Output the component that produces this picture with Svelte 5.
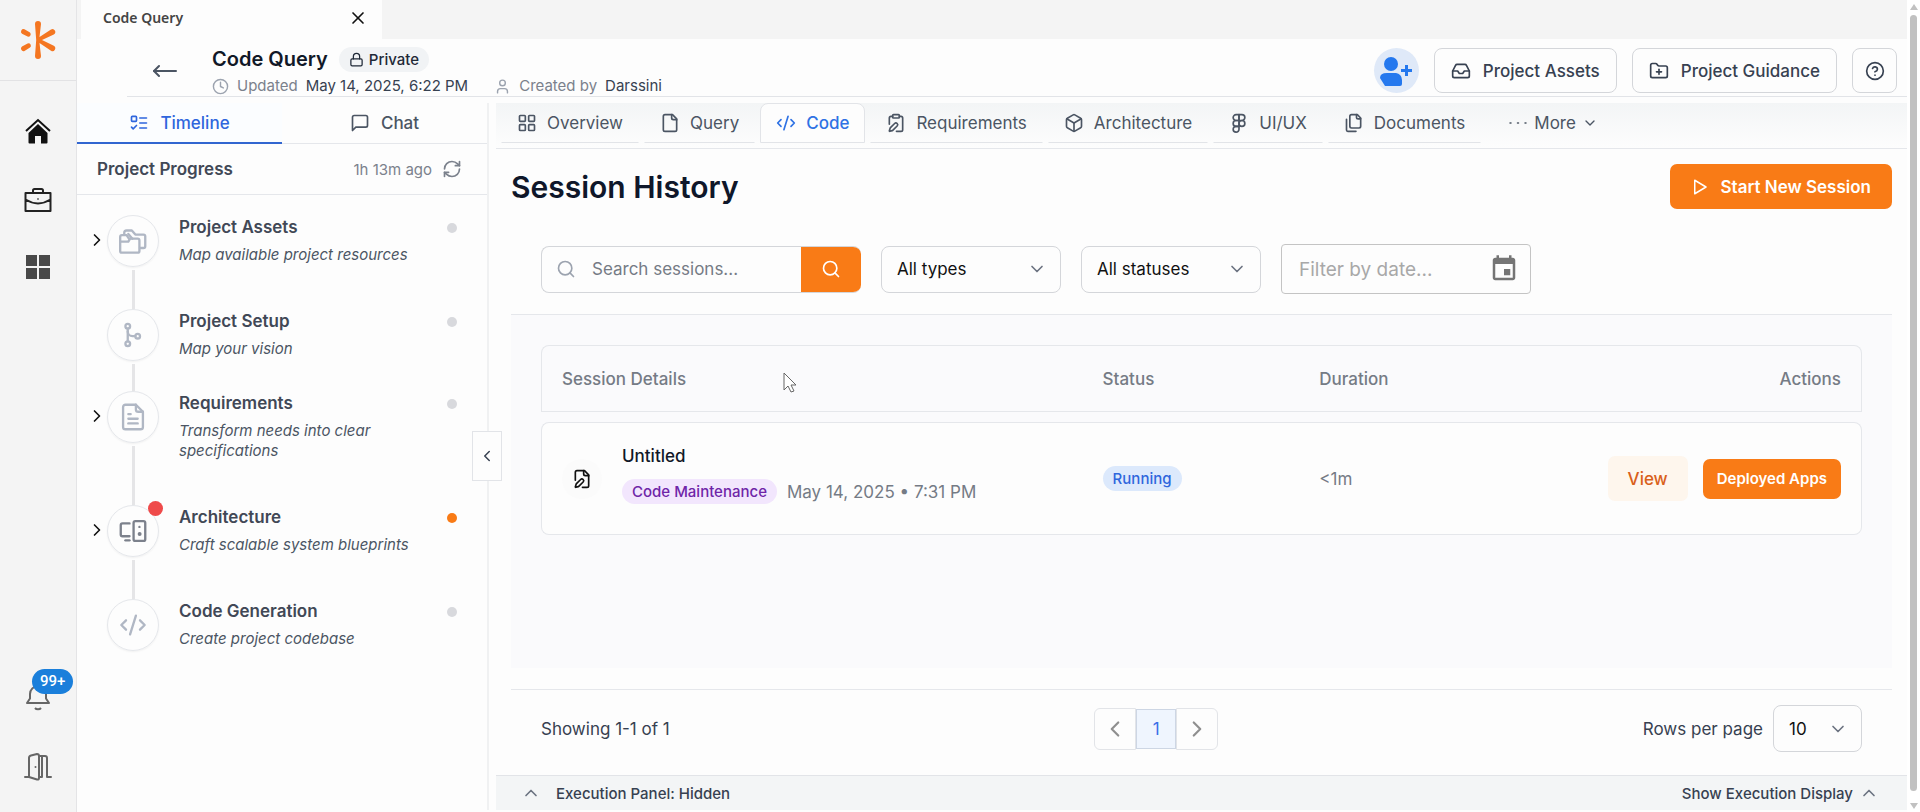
<script>
    // every icon is drawn on a 24x24 grid
    const icons = {
        arrowLeft: ['M23 12H1', 'M6 7l-5 5 5 5'],
        lock: ['M5 11h14a2 2 0 0 1 2 2v7a2 2 0 0 1-2 2H5a2 2 0 0 1-2-2v-7a2 2 0 0 1 2-2z', 'M7 11V7a5 5 0 0 1 10 0v4'],
        clock: ['M2 12a10 10 0 1 0 20 0a10 10 0 1 0-20 0', 'M12 6v6l4 2'],
        user: ['M19 21v-2a4 4 0 0 0-4-4H9a4 4 0 0 0-4 4v2', 'M8 7a4 4 0 1 0 8 0a4 4 0 1 0-8 0'],
        inbox: ['M22 12h-6l-2 3h-4l-2-3H2', 'M5.45 5.11L2 12v6a2 2 0 0 0 2 2h16a2 2 0 0 0 2-2v-6l-3.45-6.89A2 2 0 0 0 16.76 4H7.24a2 2 0 0 0-1.79 1.11z'],
        folderPlus: ['M12 10v6', 'M9 13h6', 'M20 20a2 2 0 0 0 2-2V8a2 2 0 0 0-2-2h-7.9a2 2 0 0 1-1.69-.9L9.6 3.9A2 2 0 0 0 7.93 3H4a2 2 0 0 0-2 2v13a2 2 0 0 0 2 2z'],
        help: ['M2 12a10 10 0 1 0 20 0a10 10 0 1 0-20 0', 'M9.09 9a3 3 0 0 1 5.83 1c0 2-3 3-3 3', 'M12 17h.01'],
        close: ['M18 6L6 18', 'M6 6l12 12'],
        listTodo: ['M4 4h4a1 1 0 0 1 1 1v4a1 1 0 0 1-1 1H4a1 1 0 0 1-1-1V5a1 1 0 0 1 1-1z', 'M3 17l2 2 4-4', 'M13 6h8', 'M13 12h8', 'M13 18h8'],
        chat: ['M21 15a2 2 0 0 1-2 2H7l-4 4V5a2 2 0 0 1 2-2h14a2 2 0 0 1 2 2z'],
        refresh: ['M3 12a9 9 0 0 1 9-9 9.75 9.75 0 0 1 6.74 2.74L21 8', 'M21 3v5h-5', 'M21 12a9 9 0 0 1-9 9 9.75 9.75 0 0 1-6.74-2.74L3 16', 'M8 16H3v5'],
        grid: ['M4 3h5a1 1 0 0 1 1 1v5a1 1 0 0 1-1 1H4a1 1 0 0 1-1-1V4a1 1 0 0 1 1-1z', 'M15 3h5a1 1 0 0 1 1 1v5a1 1 0 0 1-1 1h-5a1 1 0 0 1-1-1V4a1 1 0 0 1 1-1z', 'M15 14h5a1 1 0 0 1 1 1v5a1 1 0 0 1-1 1h-5a1 1 0 0 1-1-1v-5a1 1 0 0 1 1-1z', 'M4 14h5a1 1 0 0 1 1 1v5a1 1 0 0 1-1 1H4a1 1 0 0 1-1-1v-5a1 1 0 0 1 1-1z'],
        file: ['M15 2H6a2 2 0 0 0-2 2v16a2 2 0 0 0 2 2h12a2 2 0 0 0 2-2V7z', 'M14 2v4a2 2 0 0 0 2 2h4'],
        code: ['M18 16l4-4-4-4', 'M6 8l-4 4 4 4', 'M14.5 4l-5 16'],
        clipboardPen: ['M9 2h6a1 1 0 0 1 1 1v2a1 1 0 0 1-1 1H9a1 1 0 0 1-1-1V3a1 1 0 0 1 1-1z', 'M16 4h2a2 2 0 0 1 2 2v14a2 2 0 0 1-2 2h-5.5', 'M4 13.5V6a2 2 0 0 1 2-2h2', 'M13.378 15.626a1 1 0 1 0-3.004-3.004l-5.01 5.012a2 2 0 0 0-.506.854l-.837 2.87a.5.5 0 0 0 .62.62l2.87-.837a2 2 0 0 0 .854-.506z'],
        box: ['M21 8a2 2 0 0 0-1-1.73l-7-4a2 2 0 0 0-2 0l-7 4A2 2 0 0 0 3 8v8a2 2 0 0 0 1 1.73l7 4a2 2 0 0 0 2 0l7-4A2 2 0 0 0 21 16z', 'M3.3 7l8.7 5 8.7-5', 'M12 22V12'],
        figma: ['M5 5.5A3.5 3.5 0 0 1 8.5 2H12v7H8.5A3.5 3.5 0 0 1 5 5.5z', 'M12 2h3.5a3.5 3.5 0 1 1 0 7H12z', 'M12 12.5a3.5 3.5 0 1 1 7 0 3.5 3.5 0 1 1-7 0z', 'M5 19.5A3.5 3.5 0 0 1 8.5 16H12v3.5a3.5 3.5 0 1 1-7 0z', 'M5 12.5A3.5 3.5 0 0 1 8.5 9H12v7H8.5A3.5 3.5 0 0 1 5 12.5z'],
        files: ['M20 7h-3a2 2 0 0 1-2-2V2', 'M9 18a2 2 0 0 1-2-2V4a2 2 0 0 1 2-2h7l4 4v10a2 2 0 0 1-2 2z', 'M3 7.6v12.8A1.6 1.6 0 0 0 4.6 22h9.8'],
        dots: ['M11.5 12h1', 'M20.5 12h1', 'M2.5 12h1'],
        chevronDown: ['M6 9l6 6 6-6'],
        chevronUp: ['M6 15l6-6 6 6'],
        chevronLeft: ['M15 18l-6-6 6-6'],
        chevronRight: ['M9 18l6-6-6-6'],
        play: ['M5 3l15 9-15 9z'],
        search: ['M3 11a8 8 0 1 0 16 0a8 8 0 1 0-16 0', 'M21 21l-4.3-4.3'],
        filePen: ['M12.5 22H18a2 2 0 0 0 2-2V7l-5-5H6a2 2 0 0 0-2 2v9.5', 'M14 2v4a2 2 0 0 0 2 2h4', 'M13.378 15.626a1 1 0 1 0-3.004-3.004l-5.01 5.012a2 2 0 0 0-.506.854l-.837 2.87a.5.5 0 0 0 .62.62l2.87-.837a2 2 0 0 0 .854-.506z'],
        folders: ['M2.5 7h4l2 3H16a1.5 1.5 0 0 1 1.5 1.5v9A1.5 1.5 0 0 1 16 22H2.500A1.500 1.500 0 0 1 1 20.500v-12A1.500 1.500 0 0 1 2.500 7z', 'M1 12.500h7l1.500-2.500', 'M4.500 6.500V5a2 2 0 0 1 2-2h4.500l3 3.500h7A1.500 1.500 0 0 1 22.500 8v8.500A1.500 1.500 0 0 1 21 18h-3', 'M8 6l3.500 4'],
        branch: ['M5.5 4.5a2 2 0 1 0 4 0a2 2 0 1 0-4 0', 'M5.5 19.5a2 2 0 1 0 4 0a2 2 0 1 0-4 0', 'M14 13a2 2 0 1 0 4 0a2 2 0 1 0-4 0', 'M7.5 6.5v11', 'M7.5 9a4 4 0 0 0 4 4H14'],
        document: ['M14.5 1.5H5.5a2 2 0 0 0-2 2v17a2 2 0 0 0 2 2h13a2 2 0 0 0 2-2v-13z', 'M14.5 1.5v4a2 2 0 0 0 2 2h4', 'M8 9.5h2', 'M8 13.5h8', 'M8 17.5h8'],
        devices: ['M14 3.5h7A1.5 1.5 0 0 1 22.5 5v14a1.5 1.5 0 0 1-1.5 1.5h-7a1.5 1.5 0 0 1-1.5-1.5V5A1.5 1.5 0 0 1 14 3.5z', 'M9 5.5H3A1.5 1.5 0 0 0 1.5 7v8A1.5 1.5 0 0 0 3 16.5h6', 'M5.5 20H9', 'M17.5 8.5h.01', 'M17 14.5a.7.7 0 1 0 1.4 0a.7.7 0 1 0-1.4 0']
    };

    const steps = [
        { title: 'Project Assets', text: 'Map available project resources', icon: 'folders', expandable: true },
        { title: 'Project Setup', text: 'Map your vision', icon: 'branch' },
        { title: 'Requirements', text: 'Transform needs into clear specifications', icon: 'document', expandable: true },
        { title: 'Architecture', text: 'Craft scalable system blueprints', icon: 'devices', expandable: true, active: true },
        { title: 'Code Generation', text: 'Create project codebase', icon: 'code' }
    ];

    const tabs = [
        { label: 'Overview', icon: 'grid' },
        { label: 'Query', icon: 'file' },
        { label: 'Code', icon: 'code' },
        { label: 'Requirements', icon: 'clipboardPen' },
        { label: 'Architecture', icon: 'box' },
        { label: 'UI/UX', icon: 'figma' },
        { label: 'Documents', icon: 'files' }
    ];

    let currentTab = $state('Code');
    let sideTab = $state('Timeline');
    let query = $state('');
    let date = $state('');
</script>

{#snippet icon(name, size = 20)}
    <svg class="icon" width={size} height={size} viewBox="0 0 24 24" aria-hidden="true">
        {#each icons[name] as d}
            <path {d} />
        {/each}
    </svg>
{/snippet}

<div class="app">
    <nav class="rail" aria-label="Main">
        <a class="logo" href="#home" aria-label="Start page">
            <svg width="36" height="40" viewBox="0 0 36 40">
                <path class="arm" d="M15 4a3 3 0 0 1 6 0L19.500 17l11.500-7.500a2.800 2.800 0 0 1 2.800 4.900L22 20l11.800 5.800a2.800 2.800 0 0 1-2.800 4.900L19.500 23l1.500 13a3 3 0 0 1-6 0l1.200-16z" />
                <path class="arm" d="M4.500 9.300l5.500 3.300a2.400 2.400 0 0 1-2.400 4L2 13.800a2.600 2.600 0 0 1 2.500-4.500zM2 26.500l5.600-3a2.400 2.400 0 0 1 2.400 4.100L4.500 31a2.600 2.600 0 0 1-2.500-4.500z" />
            </svg>
        </a>
        <div class="rail-links">
            <a href="#home" aria-label="Home">
                <svg width="28" height="28" viewBox="0 0 28 28">
                    <path d="M2 14L14 3l12 11" fill="none" stroke="#111" stroke-width="2" />
                    <path d="M14 7L4.500 16v9.500a1 1 0 0 0 1 1H11V19h6v7.500h5.500a1 1 0 0 0 1-1V16z" fill="#111" />
                </svg>
            </a>
            <a href="#work" aria-label="Work">
                <svg width="28" height="28" viewBox="0 0 28 28" fill="none" stroke="#222" stroke-width="2" stroke-linejoin="round">
                    <path d="M1.500 8h25v18h-25zM9 8V5.500A1.500 1.500 0 0 1 10.500 4h7A1.500 1.500 0 0 1 19 5.500V8M1.500 14.500c8 5 17 5 25 0M13.500 14h1" />
                </svg>
            </a>
            <a href="#apps" aria-label="Apps">
                <svg width="28" height="28" viewBox="0 0 28 28" fill="#484848">
                    <path d="M2 2h11v11H2zM15 2h11v11H15zM2 15h11v11H2zM15 15h11v11H15z" />
                </svg>
            </a>
        </div>
        <div class="rail-links bottom">
            <button class="bell" aria-label="Notifications">
                <svg width="28" height="28" viewBox="0 0 28 28" fill="none" stroke="#666" stroke-width="2">
                    <path d="M3 18h22l-3-4.500V9A8 8 0 0 0 6 9v4.500z" stroke-linejoin="round" />
                    <path d="M11 23a3.500 2.500 0 0 0 6 0" />
                </svg>
                <span class="badge">99+</span>
            </button>
            <button aria-label="Sign out">
                <svg width="28" height="28" viewBox="0 0 28 28" fill="none" stroke="#666" stroke-width="2" stroke-linecap="round" stroke-linejoin="round">
                    <path d="M1 24h4V5q0-2 2-2.500l6-1.500q2 0 2 2v22q0 2-2 1.500L5 24M15 3h6q2 0 2 2v19h4M18 3v21h-3M11.500 14h.01" />
                </svg>
            </button>
        </div>
    </nav>

    <div class="workspace">
        <div class="tab-strip">
            <div class="file-tab">
                <span>Code Query</span>
                <button aria-label="Close tab">{@render icon('close')}</button>
            </div>
        </div>

        <header>
            <button class="back" aria-label="Back">{@render icon('arrowLeft', 24)}</button>
            <div class="project">
                <div class="name">
                    <h1>Code Query</h1>
                    <span class="private">{@render icon('lock', 15)}Private</span>
                </div>
                <div class="meta">
                    <span>{@render icon('clock', 17)}Updated <b>May 14, 2025, 6:22 PM</b></span>
                    <span>{@render icon('user', 17)}Created by <b>Darssini</b></span>
                </div>
            </div>
            <button class="invite" aria-label="Add member">
                <svg width="32" height="30" viewBox="0 0 32 30" fill="#2478ee">
                    <circle cx="11" cy="8" r="7" />
                    <path d="M7 17h9a7 7 0 0 1 6 7v4q0 2-2 2H5L0 22q0-5 7-5zM25 9h3v4h4v3h-4v4h-3v-4h-4v-3h4z" />
                </svg>
            </button>
            <button class="outlined">{@render icon('inbox')}Project Assets</button>
            <button class="outlined">{@render icon('folderPlus')}Project Guidance</button>
            <button class="outlined square" aria-label="Help">{@render icon('help')}</button>
        </header>

        <div class="body">
            <aside>
                <div class="side-tabs">
                    <button class:selected={sideTab === 'Timeline'} onclick={() => (sideTab = 'Timeline')}>
                        {@render icon('listTodo')}Timeline
                    </button>
                    <button class:selected={sideTab === 'Chat'} onclick={() => (sideTab = 'Chat')}>
                        {@render icon('chat')}Chat
                    </button>
                </div>
                <div class="progress">
                    <h2>Project Progress</h2>
                    <span>1h 13m ago</span>
                    <button aria-label="Refresh">{@render icon('refresh')}</button>
                </div>
                <ol>
                    {#each steps as step}
                        <li class:expandable={step.expandable} class:active={step.active}>
                            <div class="toggle">
                                {#if step.expandable}
                                    <button aria-label="Expand {step.title}">{@render icon('chevronRight')}</button>
                                {/if}
                            </div>
                            <div class="track">
                                <div class="disc">{@render icon(step.icon, 28)}</div>
                                <div class="line"></div>
                            </div>
                            <div class="text">
                                <h3>{step.title}</h3>
                                <p>{step.text}</p>
                            </div>
                            <i class="dot"></i>
                        </li>
                    {/each}
                </ol>
                <button class="collapse" aria-label="Collapse panel">{@render icon('chevronLeft', 18)}</button>
            </aside>

            <main>
                <div class="tabs">
                    {#each tabs as tab}
                        <button class:selected={currentTab === tab.label} onclick={() => (currentTab = tab.label)}>
                            {@render icon(tab.icon)}{tab.label}
                        </button>
                    {/each}
                    <button class="more">{@render icon('dots')}More{@render icon('chevronDown', 16)}</button>
                </div>

                <div class="content">
                    <div class="heading">
                        <h2>Session History</h2>
                        <button class="start">{@render icon('play', 18)}Start New Session</button>
                    </div>

                    <div class="filters">
                        <div class="search">
                            {@render icon('search')}
                            <input type="text" placeholder="Search sessions..." aria-label="Search sessions" bind:value={query} />
                            <button aria-label="Search">{@render icon('search')}</button>
                        </div>
                        <div class="select">
                            <select aria-label="Type"><option>All types</option></select>
                            {@render icon('chevronDown')}
                        </div>
                        <div class="select">
                            <select aria-label="Status"><option>All statuses</option></select>
                            {@render icon('chevronDown')}
                        </div>
                        <div class="date">
                            <input type="text" placeholder="Filter by date..." aria-label="Filter by date" bind:value={date} />
                            <svg width="30" height="30" viewBox="0 0 24 24" fill="#757575" aria-hidden="true">
                                <path d="M17 12h-5v5h5v-5zM16 1v2H8V1H6v2H5c-1.110 0-1.990.9-1.990 2L3 19c0 1.100.890 2 2 2h14c1.100 0 2-.900 2-2V5c0-1.100-.900-2-2-2h-1V1h-2zm3 18H5V8h14v11z" />
                            </svg>
                        </div>
                    </div>

                    <div class="sessions">
                        <table>
                            <thead>
                                <tr>
                                    <th class="details">Session Details</th>
                                    <th class="status">Status</th>
                                    <th>Duration</th>
                                    <th class="right">Actions</th>
                                </tr>
                            </thead>
                            <tbody>
                                <tr>
                                    <td>
                                        <div class="session">
                                            <div class="session-icon">{@render icon('filePen')}</div>
                                            <div class="session-text">
                                                <div class="session-name">Untitled</div>
                                                <div class="session-info">
                                                    <span class="pill purple">Code Maintenance</span>
                                                    May 14, 2025 • 7:31 PM
                                                </div>
                                            </div>
                                        </div>
                                    </td>
                                    <td><span class="pill blue">Running</span></td>
                                    <td class="duration">&lt;1m</td>
                                    <td>
                                        <div class="actions">
                                            <button class="view">View</button>
                                            <button class="deployed">Deployed Apps</button>
                                        </div>
                                    </td>
                                </tr>
                            </tbody>
                        </table>
                        <svg class="cursor" width="14" height="22" viewBox="0 0 14 22" aria-hidden="true">
                            <path d="M1 1v17l4-4 3 6 3-1-3-6h5z" />
                        </svg>
                    </div>

                    <div class="paging">
                        <span>Showing 1-1 of 1</span>
                        <div class="pages">
                            <button aria-label="Previous page">{@render icon('chevronLeft', 26)}</button>
                            <button class="current">1</button>
                            <button aria-label="Next page">{@render icon('chevronRight', 26)}</button>
                        </div>
                        <div class="rows">
                            <label for="rows">Rows per page</label>
                            <div class="select small">
                                <select id="rows"><option>10</option></select>
                                {@render icon('chevronDown')}
                            </div>
                        </div>
                    </div>
                </div>

                <footer>
                    <button>{@render icon('chevronUp')}Execution Panel: Hidden</button>
                    <button class="show">Show Execution Display{@render icon('chevronUp')}</button>
                </footer>
            </main>
        </div>
    </div>

    <div class="scrollbar" aria-hidden="true">
        <i class="up"></i>
        <i class="thumb"></i>
        <i class="down"></i>
    </div>
</div>

<style>
    :global(body) {
        background: #fdfdfd;
    }

    .app {
        display: flex;
        min-height: 100vh;
        font-family: Inter, "Liberation Sans", sans-serif;
        font-size: 17px;
        color: #374151;
    }

    .app, .app * {
        box-sizing: border-box;
    }

    h1, h2, h3, p, ol {
        margin: 0;
        padding: 0;
    }

    button, input, select {
        margin: 0;
        padding: 0;
        border: 0;
        background: none;
        color: inherit;
        font: inherit;
    }

    button {
        display: flex;
        align-items: center;
        justify-content: center;
        white-space: nowrap;
        cursor: pointer;
    }

    .icon {
        flex: none;
        fill: none;
        stroke: currentColor;
        stroke-width: 2;
        stroke-linecap: round;
        stroke-linejoin: round;
    }

    /* rail */
    .rail {
        display: flex;
        flex-direction: column;
        flex: none;
        width: 77px;
        background: #f4f4f4;
        border-right: 1px solid #e4e4e6;
    }

    .logo {
        display: flex;
        align-items: center;
        justify-content: center;
        height: 81px;
        border-bottom: 1px solid #e2e2e4;
    }

    .arm {
        fill: #f47621;
    }

    .rail-links {
        display: flex;
        flex-direction: column;
        align-items: center;
        gap: 40px;
        padding-top: 36px;
    }

    .rail-links a, .rail-links button {
        height: 28px;
    }

    .bottom {
        margin-top: auto;
        padding-bottom: 31px;
    }

    .bell {
        position: relative;
    }

    .badge {
        position: absolute;
        left: 8px;
        top: -16px;
        padding: 0 8px;
        border-radius: 13px;
        background: #1a7fdb;
        color: #fff;
        font: 500 15px/25px Roboto, sans-serif;
    }

    /* top */
    .workspace {
        display: flex;
        flex-direction: column;
        flex: 1;
        min-width: 0;
    }

    .tab-strip {
        height: 39px;
        padding-left: 4px;
        background: #f4f4f4;
    }

    .file-tab {
        display: flex;
        align-items: center;
        justify-content: space-between;
        width: 301px;
        height: 39px;
        padding: 0 14px 4px 22px;
        background: #fdfdfd;
        color: #444;
        font: 600 14px "Noto Sans", sans-serif;
    }

    .file-tab button {
        color: #111;
    }

    header {
        display: flex;
        align-items: center;
        gap: 15px;
        height: 58px;
        margin-left: 50px;
        padding: 6px 10px 0 0;
        border-bottom: 1px solid #e2e4e8;
    }

    .back {
        width: 70px;
        padding-left: 5px;
        color: #4b5563;
    }

    .project {
        flex: 1;
        align-self: flex-end;
    }

    .name {
        display: flex;
        align-items: center;
        gap: 11px;
        margin-bottom: 4px;
    }

    h1 {
        font-size: 20px;
        font-weight: 600;
        line-height: 25px;
        color: #111827;
    }

    .private {
        display: flex;
        align-items: center;
        gap: 5px;
        padding: 0 10px;
        border-radius: 13px;
        background: #f1f3f5;
        color: #1f2937;
        font-size: 15px;
        font-weight: 500;
        line-height: 25px;
    }

    .meta {
        display: flex;
        gap: 26px;
        font-size: 15px;
        line-height: 20px;
        color: #7b818c;
    }

    .meta span {
        display: flex;
        align-items: center;
        gap: 8px;
    }

    .meta .icon {
        color: #9ca3af;
    }

    .meta b {
        font-weight: 400;
        color: #374151;
    }

    .invite {
        width: 45px;
        height: 45px;
        border-radius: 50%;
        background: #dfe9f8;
    }

    .outlined {
        gap: 12px;
        height: 45px;
        padding: 0 16px;
        border: 1px solid #d4d6da;
        border-radius: 8px;
        font-weight: 500;
    }

    .square {
        width: 45px;
        padding: 0;
    }

    .body {
        display: flex;
        flex: 1;
        gap: 7px;
        padding: 6px 0 2px;
    }

    /* side panel */
    aside {
        position: relative;
        flex: none;
        width: 412px;
        border-right: 2px solid #f0f1f2;
    }

    .side-tabs {
        display: flex;
        border-bottom: 1px solid #e5e7eb;
    }

    .side-tabs button {
        flex: 1;
        gap: 11px;
        height: 40px;
        border-bottom: 1px solid transparent;
        font-weight: 500;
        color: #4b5563;
    }

    .side-tabs .selected {
        margin-bottom: -1px;
        height: 41px;
        border-bottom-width: 2px;
        background: #fbfdff;
        border-color: #3266d0;
        color: #2f66dd;
    }

    .progress {
        display: flex;
        align-items: center;
        gap: 10px;
        height: 51px;
        padding: 0 25px 0 20px;
        border-bottom: 1px solid #e5e7eb;
        font-size: 15px;
        color: #7b818c;
    }

    .progress h2 {
        flex: 1;
        font-size: 17px;
        font-weight: 600;
        color: #414856;
    }

    ol {
        padding: 20px 30px 0 12px;
        list-style: none;
    }

    li {
        display: flex;
    }

    .toggle {
        width: 18px;
        padding-top: 15px;
        color: #111;
    }

    .toggle button {
        width: 16px;
        height: 20px;
    }

    .track {
        display: flex;
        flex-direction: column;
        align-items: center;
        width: 52px;
        margin-right: 20px;
    }

    .disc {
        display: flex;
        align-items: center;
        justify-content: center;
        flex: none;
        width: 52px;
        height: 52px;
        border: 1px solid #e5e7eb;
        border-radius: 50%;
        box-shadow: 0 1px 2px #0000000d;
        color: #b0b7c4;
    }

    .line {
        flex: 1;
        width: 3px;
        margin-top: 3px;
        background: #e5e5e7;
    }

    li:last-child .line {
        display: none;
    }

    .text {
        flex: 1;
        padding-bottom: 32px;
    }

    .expandable .text {
        padding-bottom: 44px;
    }

    h3 {
        margin-bottom: 5px;
        font-size: 17px;
        font-weight: 600;
        line-height: 25px;
        color: #414856;
    }

    p {
        max-width: 240px;
        font-size: 15px;
        font-style: italic;
        line-height: 20px;
        color: #4b5563;
    }

    .dot {
        width: 10px;
        height: 10px;
        margin-top: 8px;
        border-radius: 50%;
        background: #d8d9dd;
    }

    .active .dot {
        background: #f97b16;
    }

    .disc .icon {
        stroke-width: 2;
    }

    .active .disc {
        position: relative;
        color: #7c818c;
    }

    .active .disc::after {
        content: '';
        position: absolute;
        top: -5px;
        right: -5px;
        width: 15px;
        height: 15px;
        border-radius: 50%;
        background: #ef4a4a;
    }

    .collapse {
        position: absolute;
        right: -15px;
        top: 328px;
        width: 30px;
        height: 50px;
        border: 1px solid #e2e4e8;
        background: #fdfdfd;
    }

    /* main */
    main {
        display: flex;
        flex-direction: column;
        flex: 1;
        min-width: 0;
    }

    .tabs {
        display: flex;
        gap: 5px;
        height: 46px;
        padding: 0 5px;
        background: linear-gradient(#f3f5f6, #fdfdfd);
        border-bottom: 1px solid #e5e7eb;
    }

    .tabs button {
        gap: 10px;
        height: 40px;
        padding: 0 15px;
        border: 1px solid transparent;
        border-bottom-color: #e2e4e8;
        color: #4b5563;
    }

    .tabs .selected {
        background: #fdfdfd;
        border-color: #e2e4e8;
        border-radius: 8px 8px 0 0;
        color: #2f72e4;
        font-weight: 500;
    }

    .tabs .more {
        gap: 6px;
        padding: 0 21px;
        border-color: transparent;
    }

    .content {
        display: flex;
        flex-direction: column;
        flex: 1;
        padding: 15px 15px 23px;
    }

    .heading {
        display: flex;
        align-items: center;
        justify-content: space-between;
        margin-bottom: 35px;
    }

    .heading h2 {
        font-size: 30px;
        font-weight: 600;
        color: #0f172a;
    }

    .start {
        gap: 12px;
        height: 45px;
        padding: 0 21px;
        border-radius: 7px;
        background: #f97b16;
        color: #fff;
        font-weight: 600;
    }

    .filters {
        display: flex;
        align-items: center;
        gap: 20px;
        padding: 0 30px 20px;
        border-bottom: 1px solid #e5e7eb;
    }

    .search {
        display: flex;
        align-items: center;
        width: 320px;
        height: 47px;
        padding-left: 14px;
        border: 1px solid #d4d6da;
        border-right: 0;
        border-radius: 8px;
        overflow: hidden;
        color: #9ca3af;
    }

    .search input {
        flex: 1;
        min-width: 0;
        padding-left: 16px;
    }

    .search input::placeholder {
        color: #757b85;
        opacity: 1;
    }

    .search button {
        width: 60px;
        height: 47px;
        background: #f97b16;
        color: #fff;
    }

    .select {
        display: grid;
        align-items: center;
        width: 180px;
        color: #6b7280;
    }

    .select > :global(*) {
        grid-area: 1 / 1;
    }

    .select select {
        width: 100%;
        height: 47px;
        padding: 0 15px;
        border: 1px solid #d4d6da;
        border-radius: 8px;
        appearance: none;
        color: #111;
    }

    .select .icon {
        justify-self: end;
        margin-right: 14px;
        pointer-events: none;
    }

    .small {
        width: 89px;
    }

    .date {
        display: flex;
        align-items: center;
        width: 250px;
        height: 50px;
        padding: 0 11px 0 17px;
        border: 1px solid #c4c4c4;
        border-radius: 4px;
        font-size: 19px;
    }

    .date input {
        flex: 1;
        min-width: 0;
    }

    .date input::placeholder {
        color: #a8a8a8;
        opacity: 1;
    }

    .sessions {
        position: relative;
        flex: 1;
        padding: 20px 30px 0;
        background: #fafafc;
    }

    table {
        width: 100%;
        border-collapse: separate;
        border-spacing: 0 10px;
    }

    th, td {
        padding: 0 20px;
        border: solid #e5e7eb;
        border-width: 1px 0;
        text-align: left;
    }

    th:first-child, td:first-child {
        border-left-width: 1px;
        border-top-left-radius: 8px;
    }

    th:last-child, td:last-child {
        border-right-width: 1px;
        border-top-right-radius: 8px;
    }

    td:first-child {
        border-bottom-left-radius: 8px;
    }

    td:last-child {
        border-bottom-right-radius: 8px;
    }

    th {
        height: 67px;
        font-weight: 500;
        color: #757b85;
    }

    td {
        height: 113px;
        background: #fdfdfd;
    }

    .details {
        width: 41%;
    }

    .status {
        width: 16.4%;
    }

    .right {
        text-align: right;
    }

    .session {
        display: flex;
        align-items: center;
        gap: 20px;
    }

    .session-icon {
        display: flex;
        align-items: center;
        justify-content: center;
        width: 40px;
        height: 40px;
        border-radius: 50%;
        background: #fbfbfb;
        color: #111;
    }

    .session-text {
        padding-bottom: 8px;
    }

    .session-name {
        margin-bottom: 12px;
        font-weight: 500;
        line-height: 22px;
        color: #111827;
    }

    .session-info {
        display: flex;
        align-items: center;
        gap: 10px;
        color: #757b85;
    }

    .pill {
        display: inline-block;
        padding: 0 10px;
        border-radius: 13px;
        font-size: 15px;
        font-weight: 500;
        line-height: 25px;
    }

    .purple {
        background: #f2e6fd;
        color: #6f25a8;
    }

    .blue {
        background: #dce9fc;
        color: #2f66dd;
    }

    .duration {
        color: #757b85;
    }

    .actions {
        display: flex;
        align-items: center;
        justify-content: flex-end;
        gap: 15px;
    }

    .view {
        height: 45px;
        padding: 0 20px;
        border-radius: 7px;
        background: #fef6ed;
        color: #d9601a;
        font-weight: 500;
    }

    .deployed {
        height: 40px;
        padding: 0 14px;
        border-radius: 7px;
        background: #f97b16;
        color: #fff;
        font-size: 15px;
        font-weight: 600;
    }

    .cursor {
        position: absolute;
        left: 272px;
        top: 57px;
        fill: #fff;
        stroke: #666;
    }

    .paging {
        display: flex;
        align-items: center;
        justify-content: space-between;
        margin-top: 21px;
        padding: 15px 30px 0;
        border-top: 1px solid #e5e7eb;
    }

    .pages {
        display: flex;
        align-items: center;
    }

    .pages button {
        width: 42px;
        height: 42px;
        border: 1px solid #e2e4e8;
        border-radius: 6px 0 0 6px;
        color: #8f8f8f;
    }

    .pages button:last-child {
        border-radius: 0 6px 6px 0;
    }

    .pages .current {
        width: 40px;
        height: 40px;
        border-color: #cdd6e4;
        border-radius: 0;
        background: #eff5fe;
        color: #3b6fe8;
    }

    .rows {
        display: flex;
        align-items: center;
        gap: 10px;
    }

    footer {
        display: flex;
        align-items: center;
        justify-content: space-between;
        height: 35px;
        padding: 0 28px 0 25px;
        border-top: 1px solid #e2e4e8;
        background: #f3f5f6;
        font-size: 15px;
        font-weight: 500;
    }

    footer button {
        gap: 15px;
    }

    footer .show {
        gap: 6px;
    }

    footer .icon {
        color: #6b7280;
    }

    .scrollbar {
        display: flex;
        flex-direction: column;
        align-items: center;
        flex: none;
        width: 13px;
        padding: 4px 0 3px;
        background: #fff;
    }

    .up {
        border: 4px solid transparent;
        border-top: 0;
        border-bottom: 6px solid #c1c1c1;
    }

    .thumb {
        flex: 1;
        width: 7px;
        margin: 5px 0 12px;
        border-radius: 4px;
        background: #c1c1c1;
    }

    .down {
        border: 4px solid transparent;
        border-bottom: 0;
        border-top: 6px solid #c1c1c1;
    }
</style>
